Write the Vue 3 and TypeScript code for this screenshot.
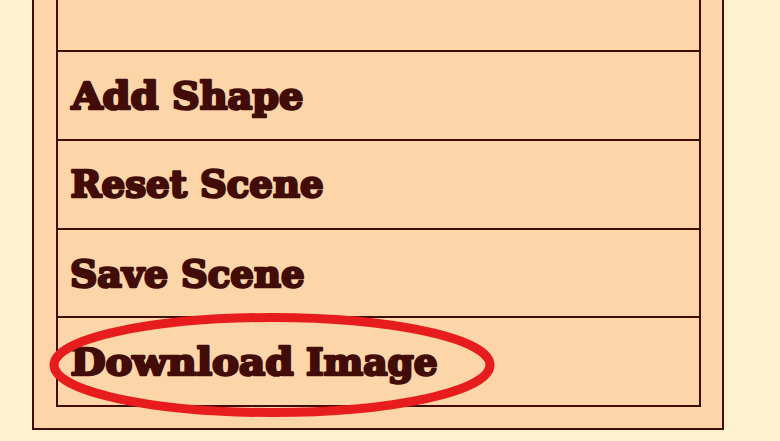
<script setup lang="ts">
interface Word { text: string; x: number; width: number }
interface Action { id: string; baseline: number; words: Word[] }

const actions: Action[] = [
  { id: 'add', baseline: 57, words: [{ text: 'Add', x: 13.5, width: 87 }, { text: 'Shape', x: 114, width: 131.5 }] },
  { id: 'reset', baseline: 56, words: [{ text: 'Reset', x: 12.5, width: 116.5 }, { text: 'Scene', x: 142, width: 123.5 }] },
  { id: 'save', baseline: 56.5, words: [{ text: 'Save', x: 12, width: 98 }, { text: 'Scene', x: 123, width: 123.5 }] },
  { id: 'download', baseline: 57, words: [{ text: 'Download', x: 12.5, width: 223 }, { text: 'Image', x: 248, width: 131.5 }] },
]
</script>

<template>
  <main class="page">
    <section class="panel">
      <div class="menu">
        <div class="spacer"></div>
        <div v-for="action in actions" :key="action.id" class="row" :class="action.id">
          <svg class="label" width="641" height="86">
            <text
              v-for="word in action.words"
              :key="word.text"
              :x="word.x"
              :y="action.baseline"
              :textLength="word.width"
              lengthAdjust="spacingAndGlyphs"
            >{{ word.text }}</text>
          </svg>
        </div>
      </div>
    </section>
    <svg class="highlight" width="446" height="104" viewBox="0 0 446 104">
      <ellipse cx="223" cy="52" rx="218" ry="47.5" />
    </svg>
  </main>
</template>

<style>
body {
  margin: 0;
  background: #fff0d0;
}
</style>

<style scoped>
.page {
  position: relative;
  box-sizing: border-box;
  width: 780px;
  height: 441px;
  padding: 0 56px 11px 32px;
  overflow: hidden;
  background: #fff0d0;
}
.panel {
  box-sizing: border-box;
  height: 430px;
  padding: 0 21px 21px 22px;
  border: 2px solid #420c09;
  border-top: 0;
  background: #fcd6a9;
}
.menu {
  box-sizing: border-box;
  height: 407px;
  border: 2px solid #420c09;
  border-top: 0;
}
.spacer {
  height: 50px;
}
.row {
  box-sizing: border-box;
  height: 89px;
  border-top: 2px solid #420c09;
}
.row.save {
  height: 88px;
}
.label {
  display: block;
  overflow: visible;
}
.label text {
  font-family: "DejaVu Serif", serif;
  font-size: 38px;
  font-weight: 700;
  fill: #420c09;
  stroke: #420c09;
  stroke-width: 2.6px;
  stroke-linejoin: round;
}
.highlight {
  position: absolute;
  left: 49px;
  top: 313px;
}
.highlight ellipse {
  fill: none;
  stroke: #e71d1d;
  stroke-width: 9px;
}
</style>
